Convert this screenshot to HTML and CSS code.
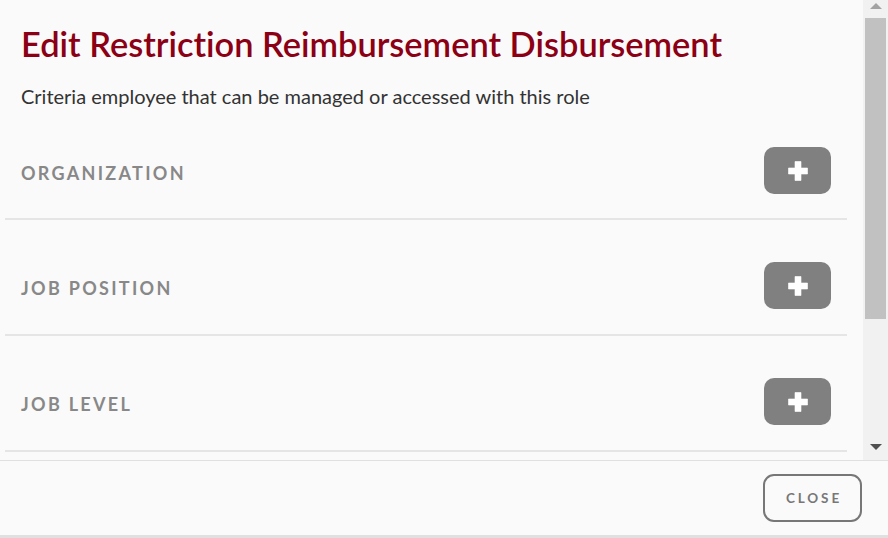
FILE: index.html
```html
<!DOCTYPE html>
<html>
<head>
<meta charset="utf-8">
<link rel="stylesheet" href="styles.css">
</head>
<body>
<div class="modal">
  <div class="main">
    <div class="content">
      <h1 class="title">Edit Restriction Reimbursement Disbursement</h1>
      <p class="subtitle">Criteria employee that can be managed or accessed with this role</p>
      <div class="row">
        <span class="label">ORGANIZATION</span>
        <button class="add" type="button"><svg viewBox="0 0 20 20" width="20" height="20"><path d="M7 0.5h6v6.5h6.5v6H13v6.5H7V13H0.5V7H7z" fill="#fff" stroke="#fff" stroke-width="0.6" stroke-linejoin="round"/></svg></button>
      </div>
      <div class="row">
        <span class="label">JOB POSITION</span>
        <button class="add" type="button"><svg viewBox="0 0 20 20" width="20" height="20"><path d="M7 0.5h6v6.5h6.5v6H13v6.5H7V13H0.5V7H7z" fill="#fff" stroke="#fff" stroke-width="0.6" stroke-linejoin="round"/></svg></button>
      </div>
      <div class="row">
        <span class="label">JOB LEVEL</span>
        <button class="add" type="button"><svg viewBox="0 0 20 20" width="20" height="20"><path d="M7 0.5h6v6.5h6.5v6H13v6.5H7V13H0.5V7H7z" fill="#fff" stroke="#fff" stroke-width="0.6" stroke-linejoin="round"/></svg></button>
      </div>
    </div>
    <div class="scrollbar">
      <div class="arrow up"></div>
      <div class="track"><div class="thumb"></div></div>
      <div class="arrow down"></div>
    </div>
  </div>
  <div class="footer">
    <button class="close" type="button">CLOSE</button>
  </div>
  <div class="strip"></div>
</div>
</body>
</html>
```
FILE: styles.css
```css
html, body {
  margin: 0;
  padding: 0;
  background: #fafafa;
}
body {
  font-family: Lato, "Open Sans", "Liberation Sans", sans-serif;
  font-variant-ligatures: none;
  width: 888px;
  height: 538px;
  overflow: hidden;
}
.modal {
  display: flex;
  flex-direction: column;
  height: 538px;
}
.main {
  display: flex;
  height: 460px;
  overflow: hidden;
}
.content {
  flex: 1;
  overflow: hidden;
  padding-top: 24px;
}
.title {
  margin: 0 0 0 21px;
  font-size: 34.4px;
  line-height: 40px;
  font-weight: 600;
  color: #8c0015;
  white-space: nowrap;
  font-variant-ligatures: none;
}
.subtitle {
  margin: 20px 0 0 21px;
  font-size: 20px;
  line-height: 24px;
  color: #333;
}
.row {
  display: flex;
  align-items: center;
  justify-content: space-between;
  margin-left: 5px;
  width: 842px;
  box-sizing: border-box;
  padding: 42px 16px 25px 16px;
  border-bottom: 2px solid #e5e5e5;
}
.row:first-of-type {
  padding-top: 39px;
  padding-bottom: 24px;
}
.label {
  font-size: 18px;
  font-weight: 700;
  letter-spacing: 2.3px;
  color: #888;
  padding-top: 4px;
}
.add {
  width: 67px;
  height: 47px;
  border: none;
  border-radius: 10px;
  background: #808080;
  display: flex;
  align-items: center;
  justify-content: center;
  padding: 0;
}
.add svg {
  display: block;
}
.scrollbar {
  width: 25px;
  background: #f1f1f1;
  display: flex;
  flex-direction: column;
  align-items: center;
}
.arrow {
  width: 0;
  height: 0;
  border-left: 6px solid transparent;
  border-right: 6px solid transparent;
  margin: 3px 0;
}
.arrow.up {
  border-bottom: 6px solid #a3a3a3;
}
.arrow.down {
  border-top: 6px solid #505050;
  margin-bottom: 10px;
}
.track {
  flex: 1;
  width: 100%;
  display: flex;
  justify-content: center;
  padding-top: 6px;
}
.thumb {
  width: 21px;
  height: 301px;
  background: #c1c1c1;
}
.footer {
  height: 74px;
  border-top: 1px solid #e0e0e0;
  display: flex;
  align-items: center;
  justify-content: flex-end;
  padding-right: 26px;
}
.close {
  width: 99px;
  height: 48px;
  border: 2px solid #777;
  border-radius: 11px;
  background: transparent;
  font-family: Lato, "Open Sans", "Liberation Sans", sans-serif;
  font-size: 13.5px;
  font-weight: 700;
  letter-spacing: 2.9px;
  color: #777;
  padding: 0 0 0 3px;
}
.strip {
  height: 3px;
  background: #e0e0e0;
}
```
